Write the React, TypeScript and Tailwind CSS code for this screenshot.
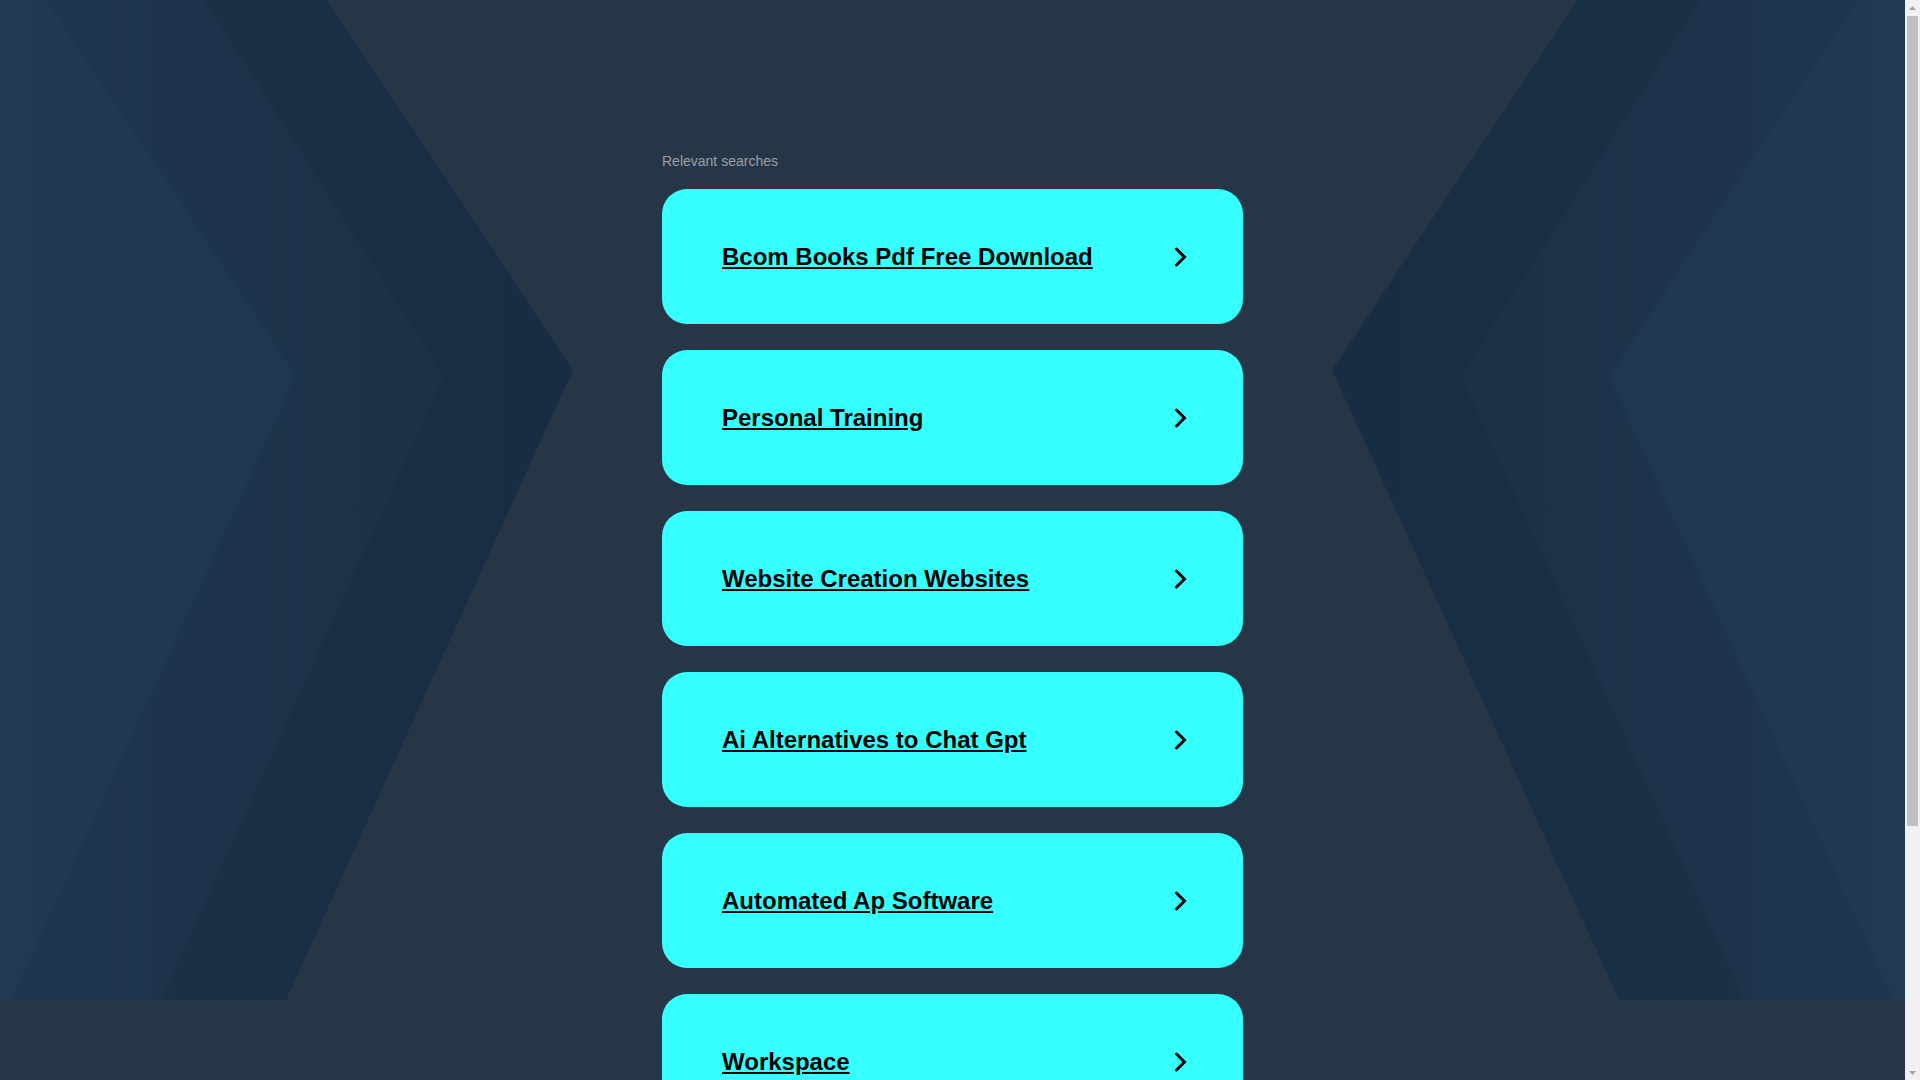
import React from 'react';

const searches = [
  'Bcom Books Pdf Free Download',
  'Personal Training',
  'Website Creation Websites',
  'Ai Alternatives to Chat Gpt',
  'Automated Ap Software',
  'Workspace',
];

// Left half of the chevron backdrop, mirrored for the right side
const Backdrop: React.FC = () => (
  <svg
    className="absolute top-0 left-0 w-full h-[1000px] pointer-events-none"
    viewBox="0 0 1905 1000"
    preserveAspectRatio="none"
  >
    <defs>
      <linearGradient id="dark" gradientUnits="userSpaceOnUse" x1="0" y1="0" x2="580" y2="0">
        <stop offset="0" stopColor="#1b3148" />
        <stop offset="1" stopColor="#182d43" />
      </linearGradient>
      <linearGradient id="mid" gradientUnits="userSpaceOnUse" x1="0" y1="0" x2="450" y2="0">
        <stop offset="0" stopColor="#1e364e" />
        <stop offset="1" stopColor="#1c3148" />
      </linearGradient>
      <linearGradient id="light" gradientUnits="userSpaceOnUse" x1="0" y1="0" x2="300" y2="0">
        <stop offset="0" stopColor="#1f3a52" />
        <stop offset="1" stopColor="#1e384f" />
      </linearGradient>
    </defs>
    {[false, true].map((flip) => (
      <g key={String(flip)} transform={flip ? 'translate(1905 0) scale(-1 1)' : undefined}>
        <polygon points="0,0 327,0 573,370 286,1000 0,1000" fill="url(#dark)" />
        <polygon points="0,0 204,0 444,376 160,1000 0,1000" fill="url(#mid)" />
        <polygon points="0,0 46,0 296,376 11,1000 0,1000" fill="url(#light)" />
      </g>
    ))}
  </svg>
);

const Chevron: React.FC = () => (
  <svg width="14" height="22" viewBox="0 0 14 22" className="shrink-0">
    <path
      d="M2.5 3 L10.5 11 L2.5 19"
      fill="none"
      stroke="#000"
      strokeWidth="3"
      strokeLinecap="round"
      strokeLinejoin="miter"
    />
  </svg>
);

// classic page scrollbar, as seen in the screenshot
const Scrollbar: React.FC = () => (
  <div className="w-[15px] shrink-0 bg-[#f1f1f1] flex flex-col">
    <div className="h-[15px] flex items-center justify-center">
      <svg width="7" height="4" viewBox="0 0 7 4"><polygon points="3.5,0 7,4 0,4" fill="#a3a3a3" /></svg>
    </div>
    <div className="flex-1 px-[2px] pt-[1px]">
      <div className="h-[810px] bg-[#c1c1c1]" />
    </div>
    <div className="h-[15px] flex items-center justify-center">
      <svg width="7" height="4" viewBox="0 0 7 4"><polygon points="0,0 7,0 3.5,4" fill="#a3a3a3" /></svg>
    </div>
  </div>
);

export default function App() {
  return (
    <div className="flex h-screen overflow-hidden bg-[#263646] font-['Liberation_Sans',Arial,sans-serif]">
      <div className="relative flex-1 overflow-hidden">
        <Backdrop />

        <div className="relative mx-auto w-[581px] pt-[153px] pb-[40px]">
          <div className="text-[14px] leading-4 text-[#9a9fa5] mb-[20px]">Relevant searches</div>

          <div className="flex flex-col gap-[26px]">
            {searches.map((s) => (
              <a
                key={s}
                href="#"
                className="flex items-center justify-between h-[135px] shrink-0 rounded-[25px] bg-[#36ffff] pl-[60px] pr-[55px]"
              >
                <span className="text-[24px] font-bold text-black underline">{s}</span>
                <Chevron />
              </a>
            ))}
          </div>
        </div>
      </div>
      <Scrollbar />
    </div>
  );
}
